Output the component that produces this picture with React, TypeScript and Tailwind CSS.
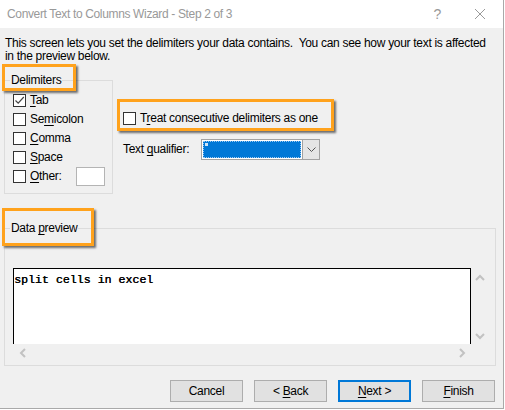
import type { ReactNode } from "react";

const ORANGE = "border-[3px] border-[#ffa21c] shadow-[2px_2px_2px_rgba(0,0,0,0.55)]";

function Key({ children }: { children: ReactNode }) {
  return <span className="underline underline-offset-[2px] decoration-[1px]">{children}</span>;
}

function Checkbox({ checked = false }: { checked?: boolean }) {
  return (
    <span className="w-[13px] h-[13px] border border-[#333] bg-white shrink-0 flex items-center justify-center">
      {checked && (
        <svg width="11" height="11" viewBox="0 0 11 11">
          <path d="M1.5 5.5 L4.2 8.2 L9.8 2" fill="none" stroke="#444" strokeWidth="1.2" />
        </svg>
      )}
    </span>
  );
}

function Chevron({ dir, className }: { dir: "up" | "down" | "left" | "right"; className?: string }) {
  const d = {
    up: "M1 6 L5 2 L9 6",
    down: "M1 2 L5 6 L9 2",
    left: "M6 1 L2 5 L6 9",
    right: "M2 1 L6 5 L2 9",
  }[dir];
  const vertical = dir === "up" || dir === "down";
  return (
    <svg
      width={vertical ? 10 : 8}
      height={vertical ? 8 : 10}
      viewBox={vertical ? "0 0 10 8" : "0 0 8 10"}
      className={className}
    >
      <path d={d} fill="none" stroke="#c2c2c2" strokeWidth="2" />
    </svg>
  );
}

function Button({ children, primary = false }: { children: ReactNode; primary?: boolean }) {
  return (
    <button
      className={`w-[73px] h-[22px] bg-[#e1e1e1] flex items-center justify-center ${
        primary ? "border-2 border-[#0078d7]" : "border border-[#adadad]"
      }`}
    >
      <span className="whitespace-pre">{children}</span>
    </button>
  );
}

const delimiters: { label: ReactNode; checked?: boolean }[] = [
  { label: <><Key>T</Key>ab</>, checked: true },
  { label: <>Se<Key>m</Key>icolon</> },
  { label: <><Key>C</Key>omma</> },
  { label: <><Key>S</Key>pace</> },
];

export default function App() {
  return (
    <div className="w-[505px] h-[410px] bg-white overflow-hidden text-[12px] leading-[13px] tracking-[-0.3px] text-black font-['Liberation_Sans',Arial,sans-serif]">
      <div className="w-[504px] h-[409px] bg-[#f0f0f0] border-r border-b border-[#a9a9a9] flex flex-col">
        {/* title bar */}
        <div className="h-[28px] bg-white flex items-center pl-[7px] pr-[17px] shrink-0 text-[#999] text-[12px] tracking-[-0.35px]">
          <span className="flex-1 pt-[1px]">Convert Text to Columns Wizard - Step 2 of 3</span>
          <span className="text-[14px] mr-[33px]">?</span>
          <svg width="12" height="12" viewBox="0 0 12 12">
            <path d="M1 1 L11 11 M11 1 L1 11" stroke="#999" strokeWidth="1" />
          </svg>
        </div>

        <p className="pl-[5px] mt-[9px] whitespace-nowrap">
          This screen lets you set the delimiters your data contains.&nbsp; You can see how your text is affected
          <br />
          in the preview below.
        </p>

        <div className="flex mt-[11px]">
          <fieldset className="ml-[4px] w-[109px] h-[120px] border border-[#dcdcdc] pl-[8px] pt-[7px]">
            <legend className="relative -ml-[3px] px-[1px]">
              Delimiters
              <span className={`absolute -left-[8px] -right-[14px] -top-[10px] -bottom-[4px] ${ORANGE}`} />
            </legend>
            <div className="flex flex-col gap-[6px]">
              {delimiters.map((d, i) => (
                <label key={i} className="flex items-center gap-[4px] h-[13px]">
                  <Checkbox checked={d.checked} />
                  <span>{d.label}</span>
                </label>
              ))}
              <label className="flex items-center gap-[4px] -mt-[3px]">
                <Checkbox />
                <span className="w-[42px]">
                  <Key>O</Key>ther:
                </span>
                <span className="w-[29px] h-[19px] bg-white border border-[#b4b4b4]" />
              </label>
            </div>
          </fieldset>

          <div className="ml-[10px] pt-[38px] flex flex-col">
            <label className="relative flex items-center gap-[4px] h-[13px]">
              <Checkbox />
              <span>
                T<Key>r</Key>eat consecutive delimiters as one
              </span>
              <span className={`absolute -left-[6px] -right-[14px] -top-[13px] -bottom-[6px] ${ORANGE}`} />
            </label>
            <div className="flex items-center mt-[14px]">
              <span className="w-[78px]">
                Text <Key>q</Key>ualifier:
              </span>
              <div className="w-[119px] h-[21px] border border-[#a2a2a2] bg-white flex">
                <div className="flex-1 p-[1px]">
                  <div className="h-full bg-[#0078d7] border border-dotted border-[#9ac8f0] pl-[1px] pt-[1px]">
                    <span className="block w-[3px] h-[3px] bg-[#cfe4f7]" />
                  </div>
                </div>
                <div className="w-[17px] bg-[#e5e5e5] border-l border-[#a2a2a2] flex items-center justify-center">
                  <svg width="9" height="6" viewBox="0 0 9 6">
                    <path d="M0.5 0.5 L4.5 4.5 L8.5 0.5" fill="none" stroke="#555" strokeWidth="1" />
                  </svg>
                </div>
              </div>
            </div>
          </div>
        </div>

        <fieldset className="ml-[4px] mt-[28px] w-[492px] h-[144px] border border-[#dcdcdc] pl-[8px] pt-[33px]">
          <legend className="relative -ml-[3px] px-[1px]">
            Data <Key>p</Key>review
            <span className={`absolute -left-[8px] -right-[16px] -top-[14px] -bottom-[11px] ${ORANGE}`} />
          </legend>
          <div className="flex">
            <div className="w-[458px] h-[76px] bg-white border-l border-t border-r border-black pt-[4px] font-['Liberation_Mono','Courier_New',monospace] text-[11.6px] leading-[13px] tracking-normal [text-shadow:0.4px_0_0_#000]">
              split cells in excel
            </div>
            <div className="w-[18px] flex flex-col items-center justify-between pt-[6px] pb-[4px]">
              <Chevron dir="up" />
              <Chevron dir="down" />
            </div>
          </div>
          <div className="w-[458px] h-[18px] flex items-center justify-between pl-[6px] pr-[5px]">
            <Chevron dir="left" />
            <Chevron dir="right" />
          </div>
        </fieldset>

        <div className="flex justify-end gap-[11px] pr-[8px] mt-[14px]">
          <Button>Cancel</Button>
          <Button>
            &lt; <Key>B</Key>ack
          </Button>
          <Button primary>
            <Key>N</Key>ext &gt;
          </Button>
          <Button>
            <Key>F</Key>inish
          </Button>
        </div>
      </div>
    </div>
  );
}
